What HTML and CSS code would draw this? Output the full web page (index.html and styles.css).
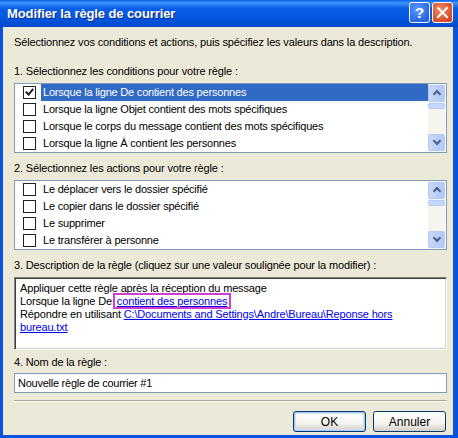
FILE: index.html
```html
<!DOCTYPE html>
<html lang="fr">
<head>
  <meta charset="UTF-8" />
  <title>Modifier la règle de courrier</title>
<link rel="stylesheet" href="styles.css">
</head>
<body>
  <div class="window">
    <div class="titlebar">
      <span class="title">Modifier la règle de courrier</span>
      <div class="tb-buttons">
        <span class="tb-btn help">?</span>
        <span class="tb-btn close">
          <svg width="13" height="13" viewBox="0 0 13 13"><path d="M2 2 L11 11 M11 2 L2 11" stroke="#fff" stroke-width="2" stroke-linecap="square"/></svg>
        </span>
      </div>
    </div>

    <div class="content">
      <p class="intro">Sélectionnez vos conditions et actions, puis spécifiez les valeurs dans la description.</p>

      <p class="label">1. Sélectionnez les conditions pour votre règle :</p>
      <div class="listbox">
        <ul class="items">
          <li class="selected"><span class="check checked"></span><span class="text">Lorsque la ligne De contient des personnes</span></li>
          <li><span class="check"></span><span class="text">Lorsque la ligne Objet contient des mots spécifiques</span></li>
          <li><span class="check"></span><span class="text">Lorsque le corps du message contient des mots spécifiques</span></li>
          <li><span class="check"></span><span class="text">Lorsque la ligne À contient les personnes</span></li>
        </ul>
        <div class="scrollbar">
          <span class="sb-btn up"></span>
          <span class="sb-thumb"></span>
          <span class="sb-track"></span>
          <span class="sb-btn down"></span>
        </div>
      </div>

      <p class="label">2. Sélectionnez les actions pour votre règle :</p>
      <div class="listbox">
        <ul class="items">
          <li><span class="check"></span><span class="text">Le déplacer vers le dossier spécifié</span></li>
          <li><span class="check"></span><span class="text">Le copier dans le dossier spécifié</span></li>
          <li><span class="check"></span><span class="text">Le supprimer</span></li>
          <li><span class="check"></span><span class="text">Le transférer à personne</span></li>
        </ul>
        <div class="scrollbar">
          <span class="sb-btn up"></span>
          <span class="sb-thumb"></span>
          <span class="sb-track"></span>
          <span class="sb-btn down"></span>
        </div>
      </div>

      <p class="label">3. Description de la règle (cliquez sur une valeur soulignée pour la modifier) :</p>
      <div class="description">
        Appliquer cette règle après la réception du message<br>
        Lorsque la ligne De <a class="link marked">contient des personnes</a><br>
        Répondre en utilisant <a class="link">C:\Documents and Settings\Andre\Bureau\Reponse hors <br>bureau.txt</a>
      </div>

      <p class="label">4. Nom de la règle :</p>
      <div class="name-input">Nouvelle règle de courrier #1</div>

      <div class="separator"></div>

      <div class="actions">
        <button class="btn default">OK</button>
        <button class="btn">Annuler</button>
      </div>
    </div>
  </div>
</body>
</html>
```

FILE: styles.css
```css
body {
  margin: 0;
  padding: 0;
  font-family: "Liberation Sans", Arial, sans-serif;
  font-size: 11px;
  letter-spacing: -0.15px;
  color: #000;
  background: #fff;
}
.window {
  width: 458px;
  height: 438px;
  box-sizing: border-box;
  background: #0a52dc;
  padding: 0 5px 3px 3px;
  display: flex;
  flex-direction: column;
}
.titlebar {
  height: 27px;
  margin: 0 -5px 0 -3px;
  background: linear-gradient(to bottom, #0a5fe8 0%, #3d95ff 10%, #0b5ee8 30%, #0456e0 70%, #0448c8 100%);
  display: flex;
  align-items: center;
  justify-content: space-between;
  padding: 0 5px 0 7px;
}
.title {
  color: #fff;
  font-family: "Liberation Sans", Arial, sans-serif;
  font-weight: bold;
  font-size: 13px;
  letter-spacing: -0.1px;
  text-shadow: 1px 1px 0 #0a2a80;
}
.tb-buttons {
  display: flex;
  gap: 2px;
  margin-top: -3px;
}
.tb-btn {
  width: 19px;
  height: 19px;
  border: 1px solid #fff;
  border-radius: 3px;
  display: flex;
  align-items: center;
  justify-content: center;
  color: #fff;
  font-weight: bold;
  font-size: 15px;
}
.help {
  background: radial-gradient(circle at 40% 35%, #5e9bff, #2460e0 80%);
}
.close {
  background: radial-gradient(circle at 40% 35%, #f08a68, #d64520 80%);
}
.content {
  flex: 1;
  background: #ece9d8;
  padding: 9px 6px 0 11px;
}
p {
  margin: 0;
  height: 13px;
  line-height: 13px;
  white-space: nowrap;
}
.intro {
  margin-bottom: 16px;
}
.label {
  margin-bottom: 5px;
}
.listbox {
  height: 70px;
  box-sizing: border-box;
  border: 1px solid #7f9db9;
  background: #fff;
  display: flex;
  margin-bottom: 9px;
}
.items {
  list-style: none;
  margin: 0;
  padding: 0;
  flex: 1;
}
.items li {
  height: 17px;
  display: flex;
  align-items: center;
  font-size: 11px;
  letter-spacing: -0.2px;
}
.check {
  width: 11px;
  height: 11px;
  border: 1px solid #222;
  background: #fff;
  margin: 0 5px 0 8px;
  flex-shrink: 0;
  position: relative;
}
.checked::after {
  content: "";
  position: absolute;
  left: 3px;
  top: 0;
  width: 3px;
  height: 6px;
  border: solid #222;
  border-width: 0 2px 2px 0;
  transform: rotate(40deg);
}
.text {
  flex: 1;
  height: 17px;
  line-height: 17px;
  padding-left: 2px;
}
.selected .text {
  background: #316ac5;
  color: #fff;
}
.scrollbar {
  width: 17px;
  display: flex;
  flex-direction: column;
  background: #f5f4ee;
  margin-right: 1px;
}
.sb-btn {
  height: 15px;
  margin: 1px 0;
  border: 1px solid #b7caf5;
  border-radius: 2px;
  background: linear-gradient(to right, #c8d7fd, #b3c8f6);
  position: relative;
}
.sb-btn::after {
  content: "";
  position: absolute;
  left: 5px;
  width: 4px;
  height: 4px;
  border: solid #4d6185;
  border-width: 2px 0 0 2px;
}
.up::after {
  top: 5px;
  transform: rotate(45deg);
}
.down::after {
  top: 3px;
  transform: rotate(225deg);
}
.sb-thumb {
  height: 4px;
  border: 1px solid #b7caf5;
  border-radius: 2px;
  background: #c8d7fd;
}
.sb-track {
  flex: 1;
}
.description {
  height: 73px;
  box-sizing: border-box;
  background: #fff;
  border: 1px solid;
  border-color: #808080 #fff #fff #808080;
  box-shadow: inset 1px 1px 0 #404040, inset -1px -1px 0 #d4d0c8;
  padding: 4px 5px;
  line-height: 13px;
  margin-bottom: 6px;
}
.link {
  color: #0000ee;
  text-decoration: underline;
}
.marked {
  outline: 2px solid #d040d0;
  outline-offset: 0;
  padding: 0 2px;
}
.name-input {
  height: 20px;
  box-sizing: border-box;
  border: 1px solid #7f9db9;
  background: #fff;
  padding: 0 3px;
  line-height: 18px;
  font-size: 11px;
  letter-spacing: -0.25px;
  margin-top: -1px;
}
.separator {
  height: 1px;
  background: #aca899;
  border-bottom: 1px solid #fff;
  margin: 7px 0 9px;
}
.actions {
  display: flex;
  justify-content: flex-end;
  gap: 7px;
  padding-right: 1px;
}
.btn {
  width: 73px;
  height: 21px;
  border: 1px solid #003c74;
  border-radius: 3px;
  background: linear-gradient(to bottom, #fff 0%, #f4f3ee 60%, #d6d0c5 100%);
  font-family: "Liberation Sans", Arial, sans-serif;
  font-size: 12px;
  padding: 0;
  color: #000;
}
.default {
  box-shadow: inset 0 0 0 1px #a9c6f5, inset 0 0 0 2px #cfe0fb;
}
```
